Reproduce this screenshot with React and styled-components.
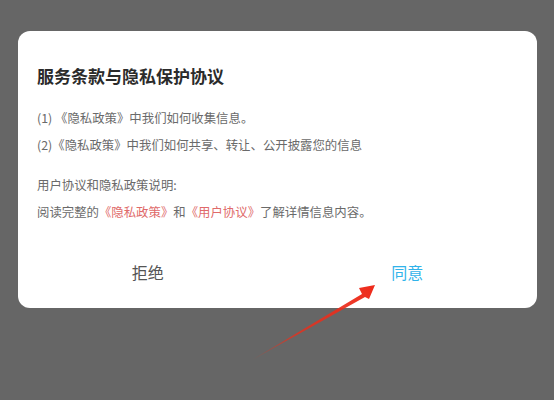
import React from "react";
import styled, { createGlobalStyle } from "styled-components";

const Global = createGlobalStyle`
  html, body { margin: 0; padding: 0; }
  body {
    background: #666666;
    font-family: "Noto Sans CJK SC", "Noto Sans", Roboto, sans-serif;
  }
`;

const Screen = styled.div`
  position: relative;
  width: 554px;
  height: 400px;
  background: #666666;
  padding: 31px 17px 0 18px;
  box-sizing: border-box;
`;

const Card = styled.div`
  background: #ffffff;
  border-radius: 12px;
  width: 519px;
  height: 277px;
  box-sizing: border-box;
  padding: 32px 19px 0 19px;
  display: flex;
  flex-direction: column;
`;

const Title = styled.h1`
  margin: 0;
  font-size: 17px;
  line-height: 26px;
  font-weight: 700;
  color: #2b2b2b;
`;

const Body = styled.div`
  margin-top: 16px;
  display: flex;
  flex-direction: column;
`;

const Line = styled.p`
  margin: 0;
  font-size: 12.4px;
  line-height: 27px;
  color: #6a6a6a;
  white-space: nowrap;
  margin-top: ${(p) => (p.$gap ? "13px" : "0")};
`;

const Link = styled.span`
  color: #e06a6a;
`;

const Actions = styled.div`
  margin: auto -19px 0 -19px;
  height: 72px;
  display: flex;
`;

const Action = styled.button`
  flex: 1;
  border: none;
  background: transparent;
  font-family: inherit;
  font-size: 16px;
  padding: 0;
  color: ${(p) => (p.$primary ? "#31b3ea" : "#555555")};
  cursor: pointer;
`;

const Arrow = styled.svg`
  position: absolute;
  left: 0;
  top: 0;
  pointer-events: none;
`;

export default function App() {
  return (
    <>
      <Global />
      <Screen>
        <Card>
          <Title>服务条款与隐私保护协议</Title>
          <Body>
            <Line>(1) 《隐私政策》中我们如何收集信息。</Line>
            <Line>(2)《隐私政策》中我们如何共享、转让、公开披露您的信息</Line>
            <Line $gap>用户协议和隐私政策说明:</Line>
            <Line>
              阅读完整的<Link>《隐私政策》</Link>和<Link>《用户协议》</Link>了解详情信息内容。
            </Line>
          </Body>
          <Actions>
            <Action>拒绝</Action>
            <Action $primary>同意</Action>
          </Actions>
        </Card>
        <Arrow width="554" height="400" viewBox="0 0 554 400">
          <defs>
            <linearGradient id="ag" x1="252" y1="360" x2="374" y2="286" gradientUnits="userSpaceOnUse">
              <stop offset="0" stopColor="#e8301c" stopOpacity="0.1" />
              <stop offset="0.35" stopColor="#e8301c" stopOpacity="0.8" />
              <stop offset="1" stopColor="#ee2a1a" stopOpacity="1" />
            </linearGradient>
          </defs>
          <polygon
            points="252,360 362,294 359,288 375,285 369,299 365,297"
            fill="url(#ag)"
          />
        </Arrow>
      </Screen>
    </>
  );
}
